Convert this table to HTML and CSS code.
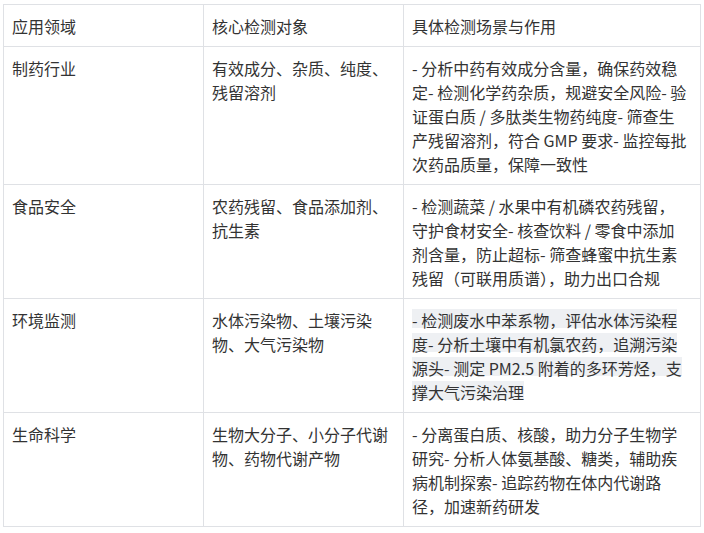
FILE: index.html
```html
<!DOCTYPE html>
<html lang="zh-CN">
<head>
<meta charset="utf-8">
<title>应用领域</title>
<link rel="stylesheet" href="styles.css">
</head>
<body>
<table class="apps">
  <colgroup>
    <col class="c1">
    <col class="c2">
    <col class="c3">
  </colgroup>
  <thead>
    <tr>
      <th>应用领域</th>
      <th>核心检测对象</th>
      <th>具体检测场景与作用</th>
    </tr>
  </thead>
  <tbody>
    <tr>
      <td>制药行业</td>
      <td>有效成分、杂质、纯度、残留溶剂</td>
      <td>- 分析中药有效成分含量，确保药效稳<br>定- 检测化学药杂质，规避安全风险- 验<br>证蛋白质 / 多肽类生物药纯度- 筛查生<br>产残留溶剂，符合 GMP 要求- 监控每批<br>次药品质量，保障一致性</td>
    </tr>
    <tr>
      <td>食品安全</td>
      <td>农药残留、食品添加剂、抗生素</td>
      <td>- 检测蔬菜 / 水果中有机磷农药残留，<br>守护食材安全- 核查饮料 / 零食中添加<br>剂含量，防止超标- 筛查蜂蜜中抗生素<br>残留（可联用质谱），助力出口合规</td>
    </tr>
    <tr>
      <td>环境监测</td>
      <td>水体污染物、土壤污染物、大气污染物</td>
      <td><span class="hl">- 检测废水中苯系物，评估水体污染程<br>度- 分析土壤中有机氯农药，追溯污染<br>源头- 测定 PM2.5 附着的多环芳烃，支<br>撑大气污染治理</span></td>
    </tr>
    <tr>
      <td>生命科学</td>
      <td>生物大分子、小分子代谢物、药物代谢产物</td>
      <td>- 分离蛋白质、核酸，助力分子生物学<br>研究- 分析人体氨基酸、糖类，辅助疾<br>病机制探索- 追踪药物在体内代谢路<br>径，加速新药研发</td>
    </tr>
  </tbody>
</table>
</body>
</html>
```
FILE: styles.css
```css
html, body {
  margin: 0;
  padding: 0;
  background: #ffffff;
}

body {
  padding: 4px 0 0 3px;
  font-family: "Noto Sans CJK SC", "Noto Sans", sans-serif;
  font-size: 16px;
  line-height: 24px;
  color: #333333;
}

.apps {
  border-collapse: collapse;
  table-layout: fixed;
  width: 697px;
  border: 1px solid #dfe1e5;
}

.c1 { width: 200px; }
.c2 { width: 200px; }
.c3 { width: 297px; }

.apps th,
.apps td {
  border: 1px solid #dfe1e5;
  padding: 9px 8px 8px 8px;
  text-align: left;
  vertical-align: top;
  font-weight: normal;
}

.hl {
  background-image: linear-gradient(#eef0f3, #eef0f3);
  background-repeat: no-repeat;
  background-size: 100% 19px;
  background-position: 0 1px;
  -webkit-box-decoration-break: clone;
  box-decoration-break: clone;
}
```
